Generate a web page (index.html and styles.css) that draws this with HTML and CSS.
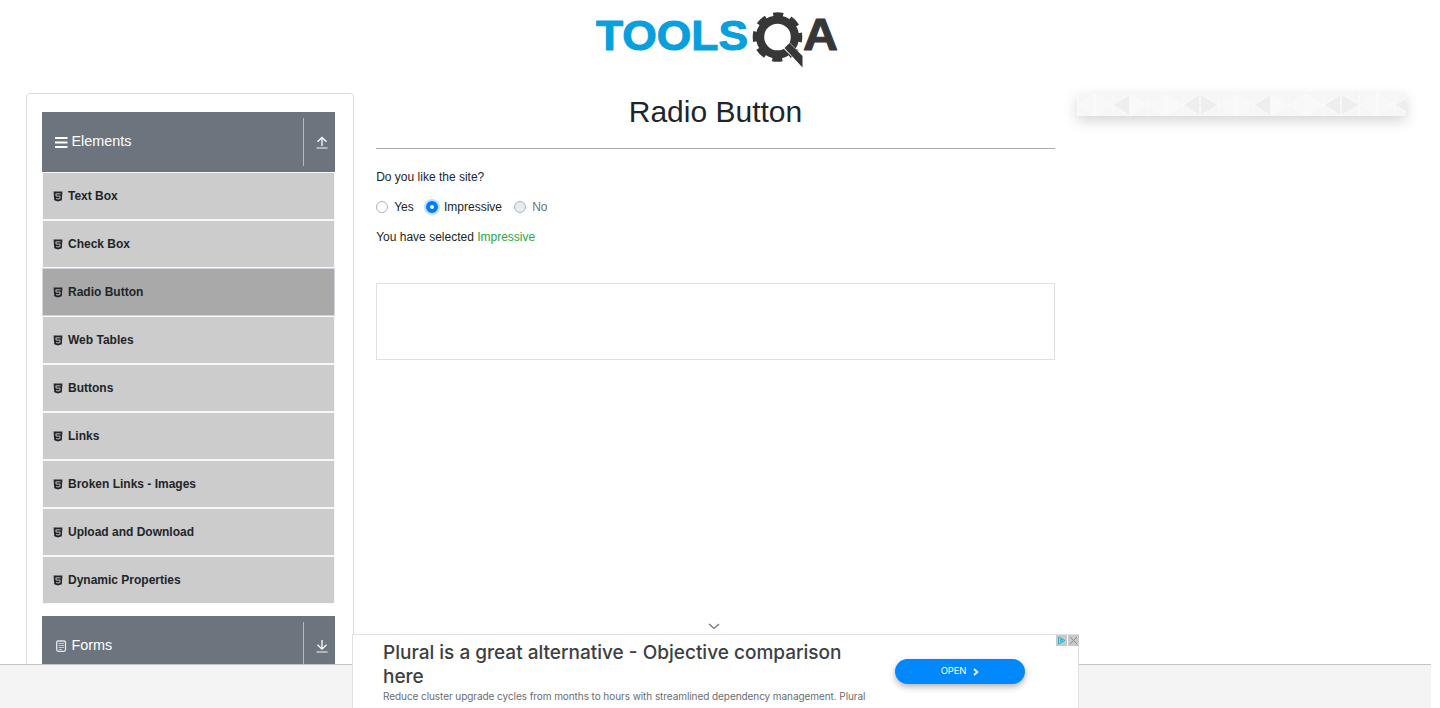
FILE: index.html
```html
<!DOCTYPE html>
<html lang="en">
<head>
<meta charset="utf-8">
<title>Radio Button</title>
<link rel="stylesheet" href="styles.css">
</head>
<body>
<svg class="defs" aria-hidden="true">
  <symbol id="html5" viewBox="0 0 10 11"><path fill="#212529" d="M.6.5h8.800L8.800 9.300 5 10.500 1.200 9.300z"/><path fill="none" stroke="#ccc" stroke-width=".9" d="M7.600 2.800H2.900l.2 2.300h4L6.900 7.500 5 8 3.100 7.500"/></symbol>
  <symbol id="up" viewBox="0 0 12 13"><path class="arrow" d="M6 10V1.500M1.500 5.800 6 1.500l4.500 4.300"/><path class="base" d="M.5 12h11"/></symbol>
  <symbol id="down" viewBox="0 0 12 13"><path class="arrow" d="M6 0v9M1.500 4.800 6 9.200l4.500-4.400"/><path class="base" d="M.5 12h11"/></symbol>
</svg>
<div class="page">
  <header>
    <svg class="logo" width="250" height="62" viewBox="592 9 250 62">
      <text class="logo-tools" x="596" y="49.500" textLength="152" lengthAdjust="spacingAndGlyphs">TOOLS</text>
      <g fill="none" stroke="#373737">
        <circle cx="777.500" cy="37" r="17.400" stroke-width="8.200"/>
        <circle cx="777.500" cy="37" r="22.300" stroke-width="5" stroke-dasharray="10 7.514" stroke-dashoffset="5"/>
      </g>
      <path fill="#fff" d="m783 48 6-6 4 4 3 3 8 8v12z"/>
      <path fill="#373737" d="m784.500 48 5-5 13 13v11.500z"/>
      <text class="logo-a" x="803" y="50" textLength="35" lengthAdjust="spacingAndGlyphs">A</text>
    </svg>
  </header>
  <main>
    <aside class="sidebar">
      <div class="group">
        <div class="group-head">
          <svg class="head-icon" width="14" height="14" viewBox="0 0 14 14"><path stroke="#fff" stroke-width="2" d="M1 3h12.500M1 7.500h12.500M1 12h12.500"/></svg>
          <span>Elements</span>
          <div class="toggle"><svg width="12" height="13"><use href="#up"/></svg></div>
        </div>
        <ul>
          <li><svg width="10" height="11"><use href="#html5"/></svg><span>Text Box</span></li>
          <li><svg width="10" height="11"><use href="#html5"/></svg><span>Check Box</span></li>
          <li class="active"><svg width="10" height="11"><use href="#html5"/></svg><span>Radio Button</span></li>
          <li><svg width="10" height="11"><use href="#html5"/></svg><span>Web Tables</span></li>
          <li><svg width="10" height="11"><use href="#html5"/></svg><span>Buttons</span></li>
          <li><svg width="10" height="11"><use href="#html5"/></svg><span>Links</span></li>
          <li><svg width="10" height="11"><use href="#html5"/></svg><span>Broken Links - Images</span></li>
          <li><svg width="10" height="11"><use href="#html5"/></svg><span>Upload and Download</span></li>
          <li><svg width="10" height="11"><use href="#html5"/></svg><span>Dynamic Properties</span></li>
        </ul>
      </div>
      <div class="group">
        <div class="group-head">
          <svg class="head-icon" width="14" height="14" viewBox="0 0 14 14"><rect x="2.700" y="2" width="8.800" height="10.300" rx="1.500" fill="none" stroke="#e6e8ea" stroke-width="1.300"/><path stroke="#c5c9cd" d="M4.500 4.500h5.500M4.500 6.500h5.500M4.500 8.500h5.500M4.500 10.500h3.500"/></svg>
          <span>Forms</span>
          <div class="toggle"><svg width="12" height="13"><use href="#down"/></svg></div>
        </div>
      </div>
    </aside>
    <section class="content">
      <h1>Radio Button</h1>
      <p>Do you like the site?</p>
      <div class="radios">
        <label><i class="radio"></i>Yes</label>
        <label><i class="radio checked"></i>Impressive</label>
        <label class="disabled"><i class="radio"></i>No</label>
      </div>
      <p class="result">You have selected <span>Impressive</span></p>
      <div class="slot"></div>
    </section>
    <div class="banner">
      <svg width="329" height="23">
        <defs><pattern id="tri" width="141" height="23" patternUnits="userSpaceOnUse">
          <rect width="141" height="23" fill="#f6f6f6"/>
          <g stroke="#fbfbfb" stroke-width="1">
            <path fill="#f8f8f8" d="M1 12 18 1v22zM18 1l18 11-18 11zM71 12 88 1v22z"/>
            <path fill="#eee" d="M36 12 53 1v22zM106 12 123 1v22zM123 1l18 11-18 11z"/>
            <path fill="#f9f9f9" d="M53 1l18 11-18 11zM88 1l18 11-18 11z"/>
            <path d="M.5 0v23M36 0v23M71 0v23M106 0v23"/>
          </g></pattern></defs>
        <rect width="329" height="23" fill="url(#tri)"/>
      </svg>
    </div>
  </main>
</div>
<footer></footer>
<div class="ad">
  <svg class="collapse" width="12" height="7" viewBox="0 0 12 7"><path fill="none" stroke="#777" stroke-width="1.300" d="m1 1 5 4.500L11 1"/></svg>
  <div class="ad-copy">
    <div class="ad-title">Plural is a great alternative - Objective comparison<br>here</div>
    <div class="ad-text">Reduce cluster upgrade cycles from months to hours with streamlined dependency management. Plural</div>
  </div>
  <div class="open">OPEN<svg width="6" height="8" viewBox="0 0 6 8"><path fill="none" stroke="#fff" stroke-width="1.800" d="m1 1 3.300 3L1 7"/></svg></div>
  <div class="choices">
    <svg width="11" height="11" viewBox="0 0 11 11"><path fill="none" stroke="#2bb5cb" d="M2.500 2v7M3 2l6 3.500L3 9M4.500 4v3l2.500-1.500z"/></svg>
    <svg width="11" height="11" viewBox="0 0 11 11"><path stroke="#2bb5cb" d="m2 2 7 7M9 2 2 9"/></svg>
  </div>
</div>
</body>
</html>
```

FILE: styles.css
```css
* { box-sizing: border-box; }
html { overflow: hidden; }
body { margin: 0; width: 1440px; height: 708px; overflow: hidden; position: relative; background: #fff; color: #212529; font: 12px/18px "Liberation Sans", Arial, sans-serif; }
.defs { position: absolute; width: 0; height: 0; }
.page { width: 1431px; height: 664px; overflow: hidden; }
header { height: 93px; padding: 9px 0 0 592px; }
.logo { display: block; }
.logo text { font-family: "Liberation Sans", Arial, sans-serif; font-weight: 700; stroke-linejoin: round; }
.logo-tools { font-size: 42px; fill: #089fde; stroke: #089fde; stroke-width: 1; }
.logo-a { font-size: 44px; fill: #373737; stroke: #373737; stroke-width: 1; }
main { display: flex; align-items: flex-start; padding-left: 26px; }
.sidebar { width: 328px; height: 700px; border: 1px solid #dcdcdc; border-radius: 4px; padding: 18px 18px 0 15px; }
.group { margin-bottom: 12px; }
.group-head { height: 60px; background: #6c757d; color: #fff; display: flex; align-items: center; padding-left: 12px; font-size: 14.400px; }
.group-head > span { margin: -2px 0 0 3.500px; }
.head-icon { margin-top: -1px; }
.toggle { margin-left: auto; width: 32px; height: 48px; border-left: 1px solid #b5babe; padding: 18px 0 0 12px; }
.toggle svg { display: block; }
.arrow { fill: none; stroke: #fff; stroke-width: 1.300; }
.base { stroke: #b9bec2; stroke-width: 1.800; }
ul { list-style: none; margin: 0; padding: 0; }
li { height: 48px; border: 1px solid #f8f8f8; background: #ccc; background-clip: padding-box; display: flex; align-items: center; gap: 5px; padding-left: 10px; font-weight: 700; }
li.active { background: #a9a9a9; border-color: #ced4da; }
.content { width: 679px; margin-left: 22px; }
h1 { margin: 0 0 19px; height: 56px; border-bottom: 1px solid #aaa; font-size: 30px; line-height: 37px; font-weight: 400; text-align: center; }
p { margin: 0; }
.content p { padding-left: .2px; }
.radios { display: flex; gap: 12px; margin: 12px 0; }
.radios label { display: flex; align-items: center; gap: 6.200px; }
.disabled { color: #6c757d; }
.radio { width: 12px; height: 12px; border: 1px solid #adb5bd; border-radius: 50%; }
.checked { border: 4px solid #007bff; background: #fff; box-shadow: 0 0 0 2px #bfdeff; }
.disabled .radio { background: #e9ecef; }
.result span { color: #28a745; }
.slot { margin-top: 37px; height: 77px; border: 1px solid #e1e1e1; }
.banner { width: 329px; height: 23px; margin-left: 22px; box-shadow: 0 5px 14px rgba(0,0,0,.17); }
.banner svg { display: block; }
footer { width: 1431px; height: 44px; border-top: 1px solid #c4c4c4; background: #f4f4f4; }
.ad { position: absolute; left: 352px; top: 634px; width: 727px; height: 74px; background: #fff; border: 1px solid #e1e1e1; border-bottom: 0; display: flex; padding: 6px 0 0 30px; }
.collapse { position: absolute; left: 355px; top: -12px; }
.ad-copy { width: 512px; white-space: nowrap; }
.ad-title { font: 500 19px/24px "Inter", sans-serif; color: #3c4043; }
.ad-text { margin-top: -1px; font: 10px/16px "Inter", sans-serif; letter-spacing: -.070px; color: #6a6d70; }
.open { width: 130px; height: 25px; margin-top: 18px; border-radius: 13px; background: #0088ff; color: #fff; display: flex; justify-content: center; align-items: center; gap: 7px; padding-bottom: 1px; font: 9.500px/12px "Inter", sans-serif; letter-spacing: -.200px; box-shadow: 0 3px 6px rgba(0,0,0,.3); }
.open svg { margin-top: 2px; }
.choices { position: absolute; right: -1px; top: 0; display: flex; gap: 1px; }
.choices svg { background: #c9c9c9; display: block; }
```
